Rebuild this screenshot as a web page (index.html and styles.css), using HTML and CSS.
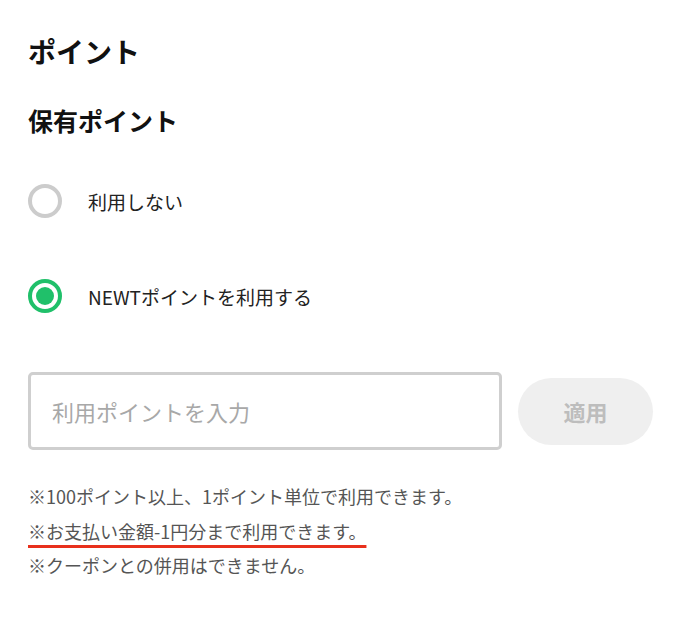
FILE: index.html
```html
<!DOCTYPE html>
<html lang="ja">
<head>
<meta charset="utf-8">
<title>ポイント</title>
<link rel="stylesheet" href="styles.css">
</head>
<body>
<main class="page">
  <h1 class="title">ポイント</h1>
  <h2 class="subtitle">保有ポイント</h2>
  <div class="options">
    <label class="option">
      <span class="radio"></span>
      <span class="option-label">利用しない</span>
    </label>
    <label class="option">
      <span class="radio radio-checked"><span class="radio-dot"></span></span>
      <span class="option-label">NEWTポイントを利用する</span>
    </label>
  </div>
  <div class="input-row">
    <div class="point-input"><span class="placeholder">利用ポイントを入力</span></div>
    <button class="apply-btn" type="button">適用</button>
  </div>
  <div class="notes">
    <p class="note">※100ポイント以上、1ポイント単位で利用できます。</p>
    <p class="note"><span class="marked">※お支払い金額-1円分まで利用できます。</span></p>
    <p class="note">※クーポンとの併用はできません。</p>
  </div>
</main>
</body>
</html>
```

FILE: styles.css
```css
* { box-sizing: border-box; }
html, body { margin: 0; padding: 0; background: #fff; }
body {
  font-family: "Noto Sans CJK JP", "Noto Sans", sans-serif;
  color: #1a1a1a;
}
.page {
  padding: 32px 27px 0 28px;
}
.title {
  margin: 0;
  font-size: 28px;
  line-height: 39px;
  font-weight: 700;
  color: #111;
}
.subtitle {
  margin: 32px 0 0;
  font-size: 25px;
  line-height: 34px;
  font-weight: 700;
  color: #111;
}
.options {
  display: flex;
  flex-direction: column;
  gap: 61px;
  margin-top: 47px;
}
.option {
  display: flex;
  align-items: center;
  gap: 26px;
  height: 34px;
}
.radio {
  width: 34px;
  height: 34px;
  border-radius: 50%;
  border: 4px solid #cccccc;
  display: flex;
  align-items: center;
  justify-content: center;
  flex: none;
}
.radio-checked {
  border-color: #20c06a;
}
.radio-dot {
  width: 18px;
  height: 18px;
  border-radius: 50%;
  background: #20c06a;
}
.option-label {
  font-size: 19px;
  color: #222;
}
.input-row {
  display: flex;
  align-items: center;
  gap: 16px;
  margin-top: 59px;
}
.point-input {
  flex: 1;
  height: 78px;
  border: 3px solid #cfcfcf;
  border-radius: 5px;
  display: flex;
  align-items: center;
  padding-left: 21px;
}
.placeholder {
  font-size: 22px;
  color: #a8a8a8;
}
.apply-btn {
  width: 135px;
  height: 67px;
  border: none;
  border-radius: 34px;
  background: #efefef;
  color: #bdbdbd;
  font-family: inherit;
  font-size: 22px;
  font-weight: 700;
  padding: 0;
}
.notes {
  margin-top: 29px;
}
.note {
  margin: 0;
  font-size: 18px;
  line-height: 34.5px;
  color: #555;
}
.marked {
  text-decoration: underline;
  text-decoration-color: #e8301c;
  text-decoration-thickness: 3px;
  text-underline-offset: 6px;
}
```
